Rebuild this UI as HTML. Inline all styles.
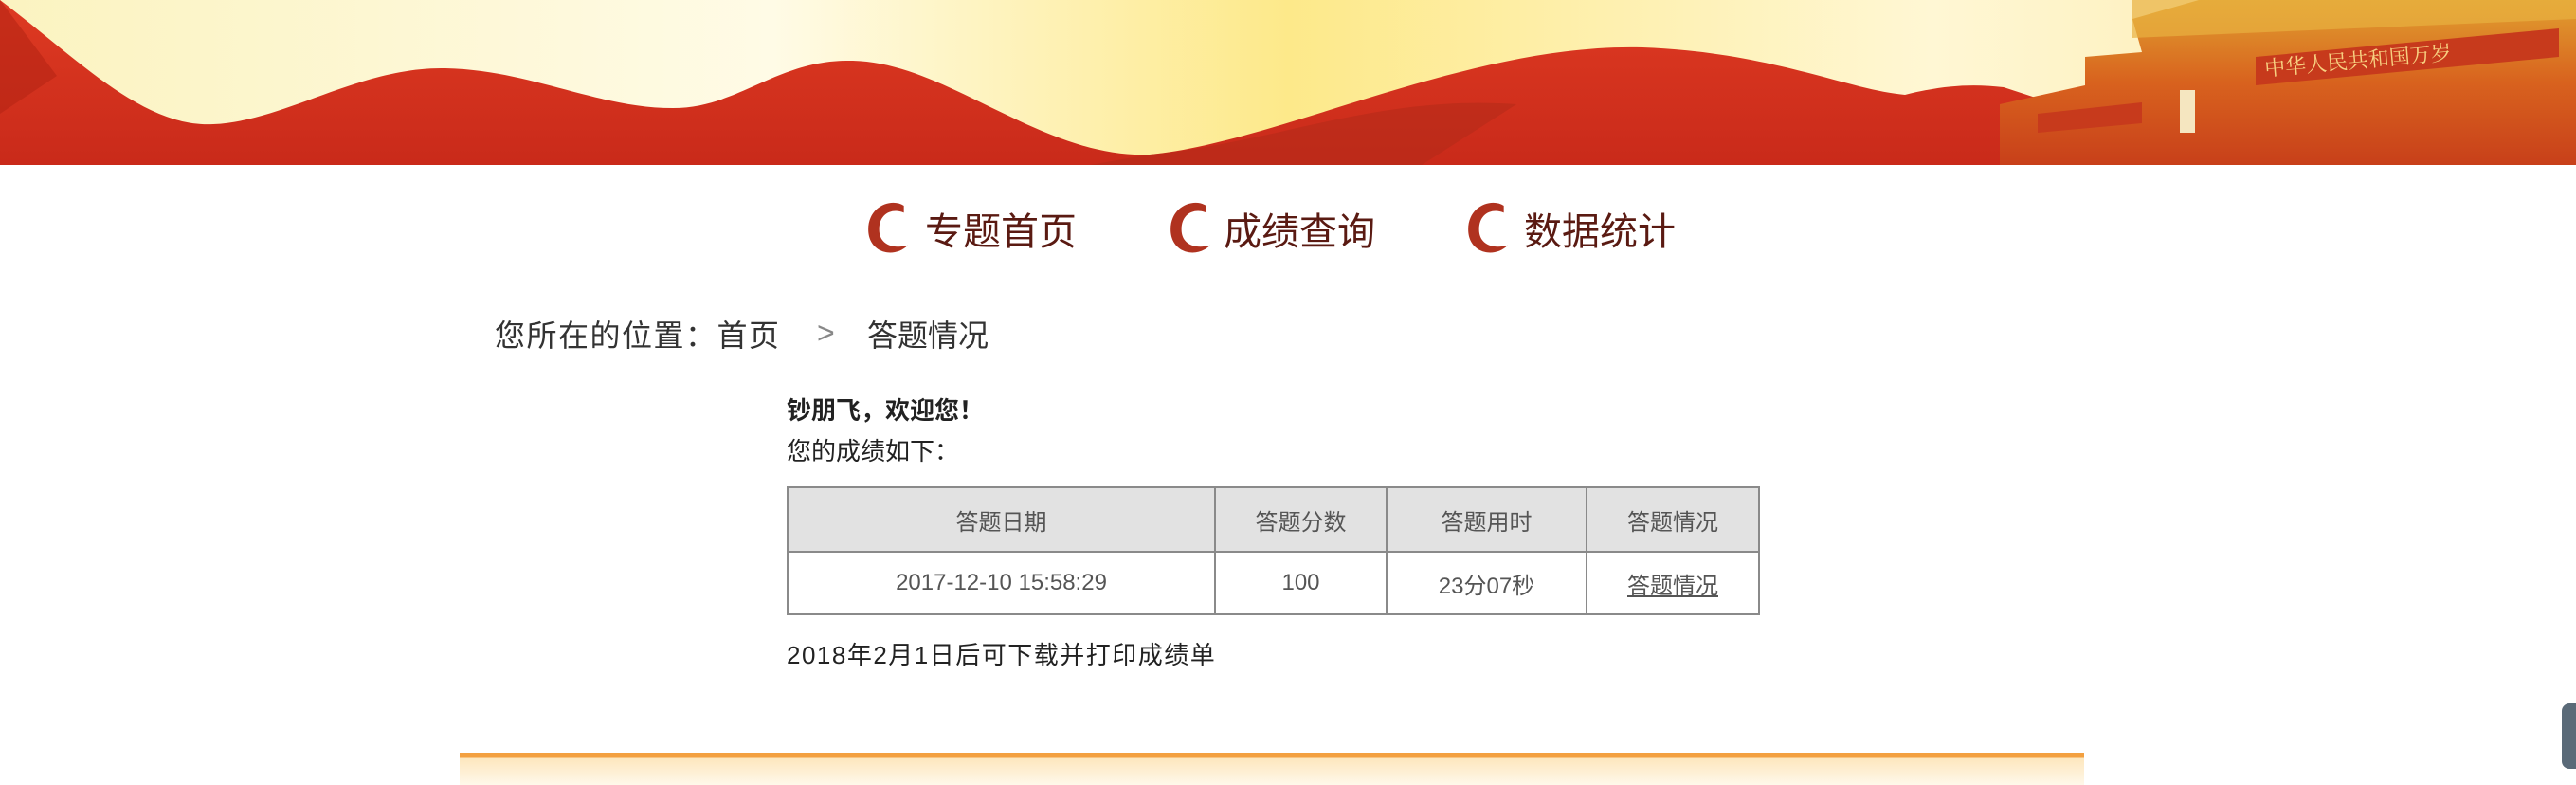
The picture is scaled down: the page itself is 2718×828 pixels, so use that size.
<!DOCTYPE html>
<html><head><meta charset="utf-8">
<style>
html,body{margin:0;padding:0;width:2718px;height:828px;overflow:hidden;background:#fff;font-family:"Liberation Sans","Noto Sans CJK SC",sans-serif;}
.abs{position:absolute;white-space:nowrap;}
.nav{font-size:40px;color:#5a1a12;top:212px;}
.ic{position:absolute;top:210px;width:50px;height:62px;}
.bc{font-size:32px;color:#333;top:329px;}
table{position:absolute;left:830px;top:513px;border-collapse:collapse;font-size:24px;color:#555;}
td,th{border:2px solid #8a8a8a;text-align:center;font-weight:normal;padding:0;}
th{background:#e2e2e2;height:66px;}
td{height:64px;}
</style></head><body>
<svg class="abs" style="left:0;top:0" width="2718" height="174" viewBox="0 0 2718 174">
<defs>
<linearGradient id="sky" x1="0" y1="0" x2="1" y2="0"><stop offset="0" stop-color="#fbf3c0"/><stop offset=".3" stop-color="#fffbe6"/><stop offset=".5" stop-color="#fde98a"/><stop offset=".75" stop-color="#fff7d4"/><stop offset="1" stop-color="#fbe7a0"/></linearGradient>
<linearGradient id="red" x1="0" y1="0" x2="0" y2="1"><stop offset="0" stop-color="#de3a22"/><stop offset="1" stop-color="#c92a1a"/></linearGradient>
<linearGradient id="bld" x1="0" y1="0" x2="0" y2="1"><stop offset="0" stop-color="#e0a030"/><stop offset=".5" stop-color="#d8621e"/><stop offset="1" stop-color="#c8401a"/></linearGradient>
</defs>
<rect width="2718" height="174" fill="url(#sky)"/>
<path d="M0,0 C80,60 150,135 225,131 C300,128 380,70 470,72 C560,74 630,114 710,114 C780,114 820,62 900,64 C1000,66 1100,168 1213,163 C1350,150 1550,45 1733,50 C1870,55 1950,95 2010,100 C2050,90 2080,88 2114,92 L2200,120 L2200,174 L0,174 Z" fill="url(#red)"/>
<path d="M0,0 L60,80 L0,120 Z" fill="#b52414" opacity=".6"/>
<path d="M1213,163 C1350,150 1450,100 1600,110 L1500,174 L1150,174 Z" fill="#b02a18" opacity=".5"/>
<path d="M2200,60 L2260,55 L2250,20 L2320,0 L2718,0 L2718,174 L2110,174 L2110,110 L2200,90 Z" fill="url(#bld)"/>
<path d="M2380,60 L2700,30 L2700,60 L2380,90 Z" fill="#c73a1c"/>
<path d="M2150,120 L2260,108 L2260,130 L2150,140 Z" fill="#c73a1c"/>
<rect x="2300" y="95" width="16" height="45" fill="#f5e6c0"/>
<path d="M2250,0 L2718,0 L2718,20 L2250,40 Z" fill="#e8b040" opacity=".7"/>
<text x="2390" y="80" font-size="22" fill="#f7d080" font-family="Liberation Serif,'Noto Serif CJK SC',serif" transform="rotate(-5 2390 80)">中华人民共和国万岁</text>
</svg>
<svg class="ic" style="left:912px" viewBox="0 0 48 58"><path d="M40,6 C28,-2 4,6 4,30 C4,54 30,60 44,46 C30,50 15,46 15,30 C15,14 28,8 40,13 Z" fill="#b0321f"/></svg>
<div class="abs nav" style="left:976px">专题首页</div>
<svg class="ic" style="left:1231px" viewBox="0 0 48 58"><path d="M40,6 C28,-2 4,6 4,30 C4,54 30,60 44,46 C30,50 15,46 15,30 C15,14 28,8 40,13 Z" fill="#b0321f"/></svg>
<div class="abs nav" style="left:1291px">成绩查询</div>
<svg class="ic" style="left:1545px" viewBox="0 0 48 58"><path d="M40,6 C28,-2 4,6 4,30 C4,54 30,60 44,46 C30,50 15,46 15,30 C15,14 28,8 40,13 Z" fill="#b0321f"/></svg>
<div class="abs nav" style="left:1608px">数据统计</div>
<div class="abs bc" style="left:522px;letter-spacing:1.5px">您所在的位置：首页</div>
<div class="abs bc" style="left:862px;top:333px;color:#888">&gt;</div>
<div class="abs bc" style="left:915px">答题情况</div>
<div class="abs" style="left:830px;top:413px;font-size:26px;font-weight:bold;color:#222">钞朋飞，欢迎您！</div>
<div class="abs" style="left:830px;top:456px;font-size:26px;color:#222">您的成绩如下：</div>
<table>
<tr><th style="width:449px">答题日期</th><th style="width:179px">答题分数</th><th style="width:209px">答题用时</th><th style="width:180px">答题情况</th></tr>
<tr><td>2017-12-10 15:58:29</td><td>100</td><td>23分07秒</td><td><u>答题情况</u></td></tr>
</table>
<div class="abs" style="left:830px;top:671px;font-size:26px;color:#222;letter-spacing:1.5px">2018年2月1日后可下载并打印成绩单</div>
<div class="abs" style="left:485px;top:794px;width:1714px;height:34px;background:linear-gradient(#f3a040 0,#f3a040 4px,#fde6bc 5px,#fff8ea 34px)"></div>
<div class="abs" style="left:2703px;top:742px;width:20px;height:69px;background:#5a6a78;border-radius:8px 0 0 8px"></div>
</body></html>
